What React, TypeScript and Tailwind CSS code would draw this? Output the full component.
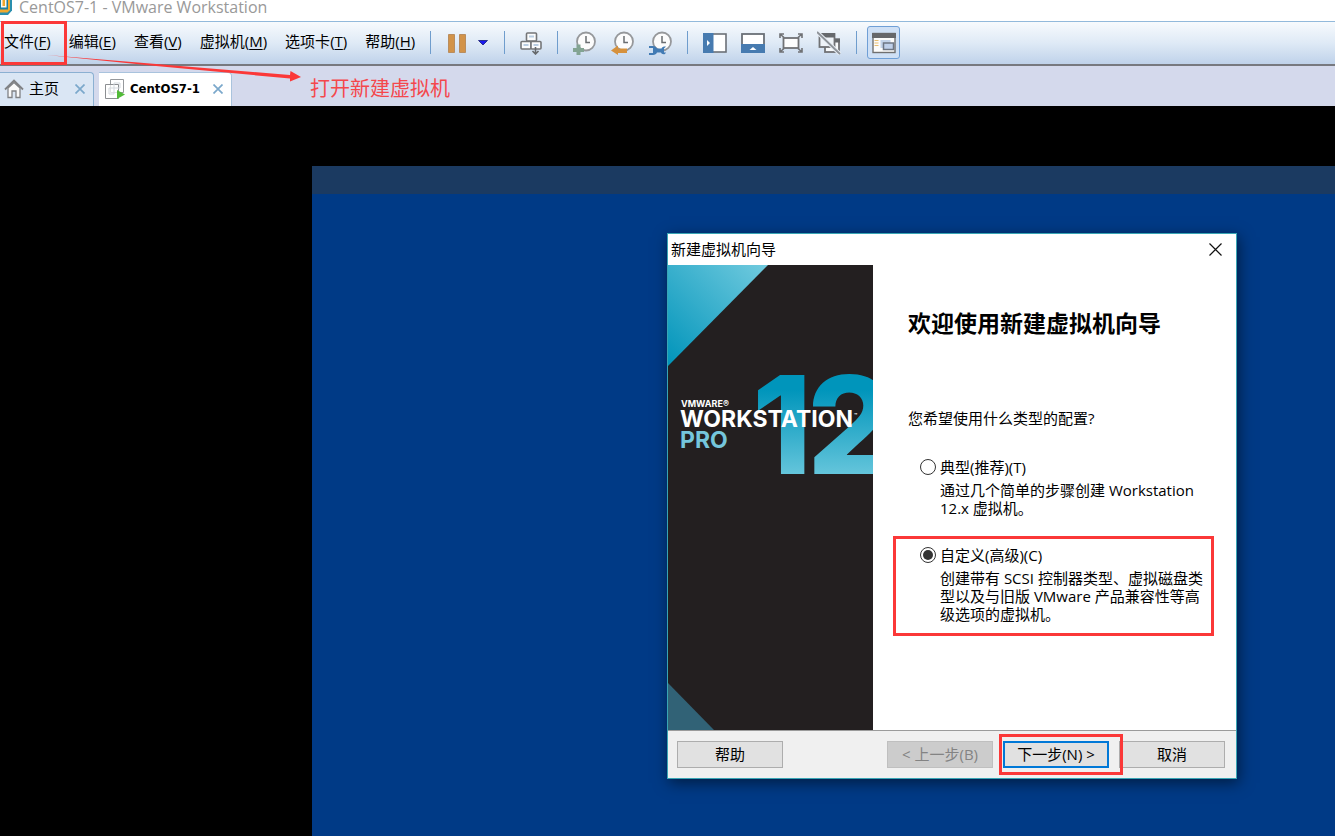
import React from 'react';

const menuItems = [
  { label: '文件', hotkey: 'F', highlighted: true },
  { label: '编辑', hotkey: 'E' },
  { label: '查看', hotkey: 'V' },
  { label: '虚拟机', hotkey: 'M' },
  { label: '选项卡', hotkey: 'T' },
  { label: '帮助', hotkey: 'H' },
];

interface IconProps {
  children: React.ReactNode;
  size?: number;
}

const Icon: React.FC<IconProps> = ({ children, size = 24 }) => (
  <svg width={size} height={size} viewBox={`0 0 ${size} ${size}`} fill="none" aria-hidden="true">
    {children}
  </svg>
);

const ClockFace = () => (
  <>
    <circle cx="14" cy="10.5" r="9" fill="#fcfcfc" stroke="#96989b" strokeWidth="1.8" />
    <path d="M14 5V11.5H18" stroke="#6a6d70" strokeWidth="1.5" />
  </>
);

const PauseIcon = () => (
  <Icon>
    <path d="M3.5 3.5h6v18h-6zM14.5 3.5h6v18h-6z" fill="#d29349" stroke="#b98d5e" />
  </Icon>
);

const SendKeysIcon = () => (
  <Icon>
    <g fill="#fbfcfd" stroke="#747678" strokeWidth="1.6">
      <rect x="7.5" y="2" width="10" height="8" rx="1" />
      <rect x="2" y="10.5" width="10" height="7.5" rx="1" />
      <rect x="12" y="10.5" width="10" height="7.5" rx="1" />
    </g>
    <path d="M10 5.5h5M4.500 14h5M14.500 14h5" stroke="#b9cde2" strokeWidth="2" />
    <path d="M16.500 16v7M13.500 20l3 3 3-3" stroke="#66696c" strokeWidth="1.6" />
  </Icon>
);

const SnapshotTakeIcon = () => (
  <Icon>
    <ClockFace />
    <path d="M4.500 13.500h4v3.500h3.500v4H8.500v3.500h-4V21H1v-4h3.500z" fill="#83a493" />
  </Icon>
);

const SnapshotRevertIcon = () => (
  <Icon>
    <ClockFace />
    <path d="M1 19.500l7-5v3h9v4.500H8V24z" fill="#d6913d" />
  </Icon>
);

const SnapshotManageIcon = () => (
  <Icon>
    <ClockFace />
    <path
      d="M1 15h4c2 0 3.500 1 4 2.500h4.500c.5-1.500 2-2 3.500-2h1l-2 2v4h2l-1 1.500c-2 .5-3.500 0-4-1.500H9c-.5 1.500-2 2.500-4 2.500H1v-2h4v-5H1z"
      fill="#427bb4"
    />
  </Icon>
);

const LibraryIcon = () => (
  <Icon>
    <rect x="1" y="3" width="22" height="18" fill="#fff" stroke="#6b7077" strokeWidth="1.6" />
    <path d="M0 2h10.500v20H0z" fill="#477bb0" />
    <path d="M4 9l3 3-3 3z" fill="#fff" />
  </Icon>
);

const ThumbnailIcon = () => (
  <Icon>
    <rect x="1" y="3" width="22" height="18" fill="#fff" stroke="#6b7077" strokeWidth="1.8" />
    <path d="M0 13h24v9H0z" fill="#477bb0" />
    <path d="M8.500 19l3.500-3 3.500 3z" fill="#fff" />
  </Icon>
);

const FullscreenIcon = () => (
  <Icon>
    <rect x="4.500" y="7" width="15" height="10" fill="#fdfdfd" stroke="#707275" strokeWidth="1.8" />
    <path
      d="M1 7V3H5M1 3L5 6.500M19 3h4V7M23 3L19 6.500M1 17v4H5M1 21L5 17.500M19 21h4V17M23 21L19 17.500"
      stroke="#707275"
      strokeWidth="1.6"
    />
  </Icon>
);

const UnityIcon = () => (
  <Icon>
    <rect x="8" y="8.500" width="14" height="12.500" fill="#f8fafc" stroke="#707275" strokeWidth="1.8" />
    <path d="M8 7.500h15v4H8z" fill="#66696d" />
    <rect x="2.500" y="3" width="15" height="13" fill="#eef3f8" stroke="#707275" strokeWidth="1.8" />
    <path d="M2 2h16v4.500H2z" fill="#66696d" />
    <path d="M0 1L23 23" stroke="#e8eef5" strokeWidth="4" />
    <path d="M0 1L23 23" stroke="#8d9298" strokeWidth="1.8" />
  </Icon>
);

const ConsoleIcon = () => (
  <Icon>
    <rect x="1" y="2.500" width="22" height="19" fill="#fcfcfb" stroke="#707070" strokeWidth="1.400" />
    <path d="M0 2h24v5H0z" fill="#66676a" />
    <path d="M2.500 9.500h4M2.500 12h4M2.500 14.500h4" stroke="#e7bd72" strokeWidth="1.200" />
    <path d="M8.500 9h10v8h-10z" fill="#c3d3e9" />
    <rect x="11.500" y="12" width="10" height="6.500" fill="#bfd0ea" stroke="#6e7684" strokeWidth="1.500" />
  </Icon>
);

const Separator = () => <span className="h-[23px] w-px shrink-0 bg-[#6f9dcd]" />;

const ToolButton: React.FC<{ label: string; children: React.ReactNode }> = ({ label, children }) => (
  <button type="button" aria-label={label} className="shrink-0">
    {children}
  </button>
);

const TitleBar = () => (
  <header className="flex h-[21px] items-start gap-[7px] overflow-hidden bg-white text-base leading-[14px] text-[#999]">
    <svg width="12" height="16" viewBox="0 0 12 16" fill="none" aria-hidden="true">
      <path d="M0 0h12v10.500L8 15H0z" fill="#2a8fae" />
      <path d="M0 0h10v10l-2.500 2.500H0z" fill="#f0a92e" />
      <path d="M0 0h8v9.500H0z" fill="#1a7fa3" />
      <path d="M1 0h5.500v7.500H1z" fill="#fbf8ee" />
      <path d="M2.500 0H5v6H2.500z" fill="#efa62b" />
    </svg>
    <h1>CentOS7-1 - VMware Workstation</h1>
  </header>
);

const Toolbar = () => (
  <div className="flex h-[45px] items-center border-t border-b-2 border-t-[#92b9db] border-b-[#77797f] bg-linear-to-b from-[#f7fafd] via-[#dfeaf6] to-[#bfd2ea] pb-px">
    <nav className="flex w-[430px] shrink-0 gap-[18px] pb-[3px] pl-1 whitespace-nowrap">
      {menuItems.map((item) => (
        <button key={item.hotkey} type="button" className="relative leading-5">
          {item.label}(<u className="underline-offset-2">{item.hotkey}</u>)
          {item.highlighted && (
            <span className="absolute -top-[10px] -right-4 -bottom-[14px] -left-[3px] border-3 border-[#fb3838]" />
          )}
        </button>
      ))}
    </nav>
    <Separator />
    <div className="flex items-center gap-2 pr-[15px] pl-[14px]">
      <ToolButton label="挂起">
        <PauseIcon />
      </ToolButton>
      <ToolButton label="电源选项">
        <svg width="12" height="8" viewBox="0 0 12 8" aria-hidden="true">
          <path d="M1.500 1.500h9L6 6z" fill="#1b1bf0" stroke="#151b78" strokeWidth=".8" />
        </svg>
      </ToolButton>
    </div>
    <Separator />
    <div className="flex px-[14px]">
      <ToolButton label="发送 Ctrl+Alt+Del">
        <SendKeysIcon />
      </ToolButton>
    </div>
    <Separator />
    <div className="flex gap-[14px] pr-[15px] pl-[14px]">
      <ToolButton label="拍摄快照">
        <SnapshotTakeIcon />
      </ToolButton>
      <ToolButton label="恢复快照">
        <SnapshotRevertIcon />
      </ToolButton>
      <ToolButton label="管理快照">
        <SnapshotManageIcon />
      </ToolButton>
    </div>
    <Separator />
    <div className="flex gap-[14px] px-[15px]">
      <ToolButton label="显示库">
        <LibraryIcon />
      </ToolButton>
      <ToolButton label="显示缩略图栏">
        <ThumbnailIcon />
      </ToolButton>
      <ToolButton label="全屏">
        <FullscreenIcon />
      </ToolButton>
      <ToolButton label="Unity 模式">
        <UnityIcon />
      </ToolButton>
    </div>
    <Separator />
    <button
      type="button"
      aria-label="控制台视图"
      className="ml-[10px] flex size-[33px] shrink-0 items-center justify-center rounded-[3px] border border-[#6f9fd6] bg-[#cfe0f5]"
    >
      <ConsoleIcon />
    </button>
  </div>
);

const TabClose = () => (
  <button type="button" aria-label="关闭标签页" className="shrink-0">
    <svg width="10" height="10" viewBox="0 0 10 10" aria-hidden="true">
      <path d="M.5.5l9 9M9.500.5l-9 9" stroke="#7ba8cb" strokeWidth="1.700" />
    </svg>
  </button>
);

const TabBar = () => (
  <div className="flex h-10 items-end gap-[5px] bg-[#d4d9ec]">
    <div className="flex h-[34px] w-[94px] items-center justify-between rounded-tr border-t border-r border-[#8bb0d2] bg-[#dae6f4] pr-2 pb-[2px] pl-1">
      <span className="flex items-center gap-[5px]">
        <svg width="20" height="20" viewBox="0 0 20 20" fill="none" aria-hidden="true">
          <path d="M4 9v9.500h4V12h4v6.500h4V9L10 3.500z" fill="#fafafa" stroke="#808285" strokeWidth="1.300" />
          <path d="M1 10.500L10 1.500l9 9" stroke="#808285" strokeWidth="1.800" />
        </svg>
        主页
      </span>
      <TabClose />
    </div>
    <div className="flex h-[34px] w-[133px] items-center justify-between rounded-tr border-t border-r border-[#a9c3dd] bg-white pr-2 pb-[2px] pl-[6px]">
      <span className="flex items-center gap-[5px] font-['DejaVu_Sans_Condensed','DejaVu_Sans',sans-serif] text-[13px] font-bold">
        <svg width="20" height="20" viewBox="0 0 20 20" fill="none" aria-hidden="true">
          <path d="M5.500.5h13v13h-13z" stroke="#96999c" />
          <path d="M.5 5.500h13v14H.5z" fill="#fff" fillOpacity=".7" stroke="#8c8f92" />
          <path d="M4 9h5v6H4zM9 4h6v5H9z" stroke="#d3d8dd" />
          <path d="M12 11v9l8-4.500z" fill="#52bb38" />
        </svg>
        CentOS7-1
      </span>
      <TabClose />
    </div>
    <p className="ml-[73px] self-center pt-[6px] text-xl leading-7 text-[#f4484c]">打开新建虚拟机</p>
  </div>
);

const WizardBanner = () => (
  <svg
    width="205"
    height="465"
    viewBox="0 0 205 465"
    className="shrink-0 bg-[#231f20]"
    role="img"
    aria-label="VMware Workstation 12 Pro"
  >
    <defs>
      <linearGradient id="corner" x1="0" y1="1" x2="1" y2="0">
        <stop offset="0" stopColor="#0094ba" />
        <stop offset="1" stopColor="#72cbdf" />
      </linearGradient>
      <linearGradient id="digits" gradientUnits="userSpaceOnUse" x1="0" y1="110" x2="0" y2="209">
        <stop offset="0.15" stopColor="#0095bb" />
        <stop offset="1" stopColor="#64c5db" />
      </linearGradient>
    </defs>
    <path d="M0 0h100L0 101z" fill="url(#corner)" />
    <path d="M0 418l46 47H0z" fill="#316276" />
    <text x="84 139" y="209" fontFamily="Inter" fontWeight="800" fontSize="136" fill="url(#digits)">
      12
    </text>
    <g fontFamily="Inter" fontWeight="700">
      <text x="13" y="142" fontSize="9" fill="#fff">
        VMWARE®
      </text>
      <text x="12" y="162" fontSize="23" fill="#fff">
        WORKSTATION
      </text>
      <text x="186" y="152" fontSize="5" fill="#fff">
        ™
      </text>
      <text x="12" y="183" fontSize="23" fill="#75c6dc">
        PRO
      </text>
    </g>
  </svg>
);

interface OptionProps {
  id: string;
  label: string;
  defaultChecked?: boolean;
  children: React.ReactNode;
}

const WizardOption: React.FC<OptionProps> = ({ id, label, defaultChecked, children }) => (
  <div>
    <div className="flex items-center gap-1">
      <input
        type="radio"
        name="config"
        id={id}
        defaultChecked={defaultChecked}
        className="size-4 appearance-none rounded-full border border-[#333] bg-white bg-clip-content p-[2px] checked:bg-[#333]"
      />
      <label htmlFor={id} className="leading-6">
        {label}
      </label>
    </div>
    <p className="mt-[2px] pl-5 leading-[18px] whitespace-nowrap">{children}</p>
  </div>
);

const wizardButton = 'h-[27px] w-[106px] border';

const Wizard = () => (
  <section
    role="dialog"
    aria-labelledby="wizard-title"
    className="w-[570px] border border-[#38a5b4] bg-white shadow-[2px_4px_14px_rgba(0,0,0,0.5)]"
  >
    <div className="flex h-[31px] items-center justify-between pr-[14px] pl-[3px]">
      <h2 id="wizard-title">新建虚拟机向导</h2>
      <button type="button" aria-label="关闭">
        <svg width="13" height="13" viewBox="0 0 13 13" aria-hidden="true">
          <path d="M.5.5l12 12M12.500.5l-12 12" stroke="#111" strokeWidth="1.200" />
        </svg>
      </button>
    </div>
    <div className="flex">
      <WizardBanner />
      <div className="flex-1 pt-10 pl-[35px]">
        <h3 className="text-[23px] leading-9 font-bold">欢迎使用新建虚拟机向导</h3>
        <p className="mt-[65px] leading-6">您希望使用什么类型的配置?</p>
        <div className="mt-[25px] pl-3">
          <WizardOption id="typical" label="典型(推荐)(T)">
            通过几个简单的步骤创建 Workstation
            <br />
            12.x 虚拟机。
          </WizardOption>
        </div>
        <div className="mt-[19px] -ml-[15px] w-[321px] border-3 border-[#fb3838] pt-1 pb-[10px] pl-6">
          <WizardOption id="custom" label="自定义(高级)(C)" defaultChecked>
            创建带有 SCSI 控制器类型、虚拟磁盘类
            <br />
            型以及与旧版 VMware 产品兼容性等高
            <br />
            级选项的虚拟机。
          </WizardOption>
        </div>
      </div>
    </div>
    <div className="flex h-12 items-center justify-between border-t border-[#9b9b9b] bg-[#f0f0f0] pr-[11px] pl-[9px]">
      <button type="button" className={`${wizardButton} border-[#adadad] bg-[#e1e1e1]`}>
        帮助
      </button>
      <div className="flex">
        <button type="button" disabled className={`${wizardButton} border-[#bfbfbf] bg-[#ccc] text-[#838383]`}>
          &lt; 上一步(B)
        </button>
        <span className="relative ml-[10px]">
          <button type="button" className={`${wizardButton} border-2 border-[#0078d7] bg-[#e1e1e1]`}>
            下一步(N) &gt;
          </button>
          <span className="pointer-events-none absolute -top-[7px] -right-[14px] -bottom-[7px] -left-1 z-10 border-3 border-[#fb3838]" />
        </span>
        <button type="button" className={`${wizardButton} ml-[10px] border-[#adadad] bg-[#e1e1e1]`}>
          取消
        </button>
      </div>
    </div>
  </section>
);

const App = () => (
  <div className="relative flex min-h-screen flex-col overflow-hidden bg-black font-['Open_Sans','Noto_Sans_CJK_SC',sans-serif] text-[15px] text-black">
    <TitleBar />
    <Toolbar />
    <TabBar />
    <main className="flex flex-1 flex-col pt-[60px] pl-[312px]">
      <div className="h-7 bg-[#1b3a61]" />
      <div className="flex-1 bg-[#003a86] pt-[39px] pb-[57px] pl-[355px]">
        <Wizard />
      </div>
    </main>
    {/* pointer from the File menu to the note */}
    <svg width="256" height="32" viewBox="0 0 256 32" className="pointer-events-none absolute top-[52px] left-[46px]" aria-hidden="true">
      <path d="M1 3l243 20 .5-4L255 25l-11 4.500V26.500L110 14z" fill="#fb3838" />
    </svg>
  </div>
);

export default App;
